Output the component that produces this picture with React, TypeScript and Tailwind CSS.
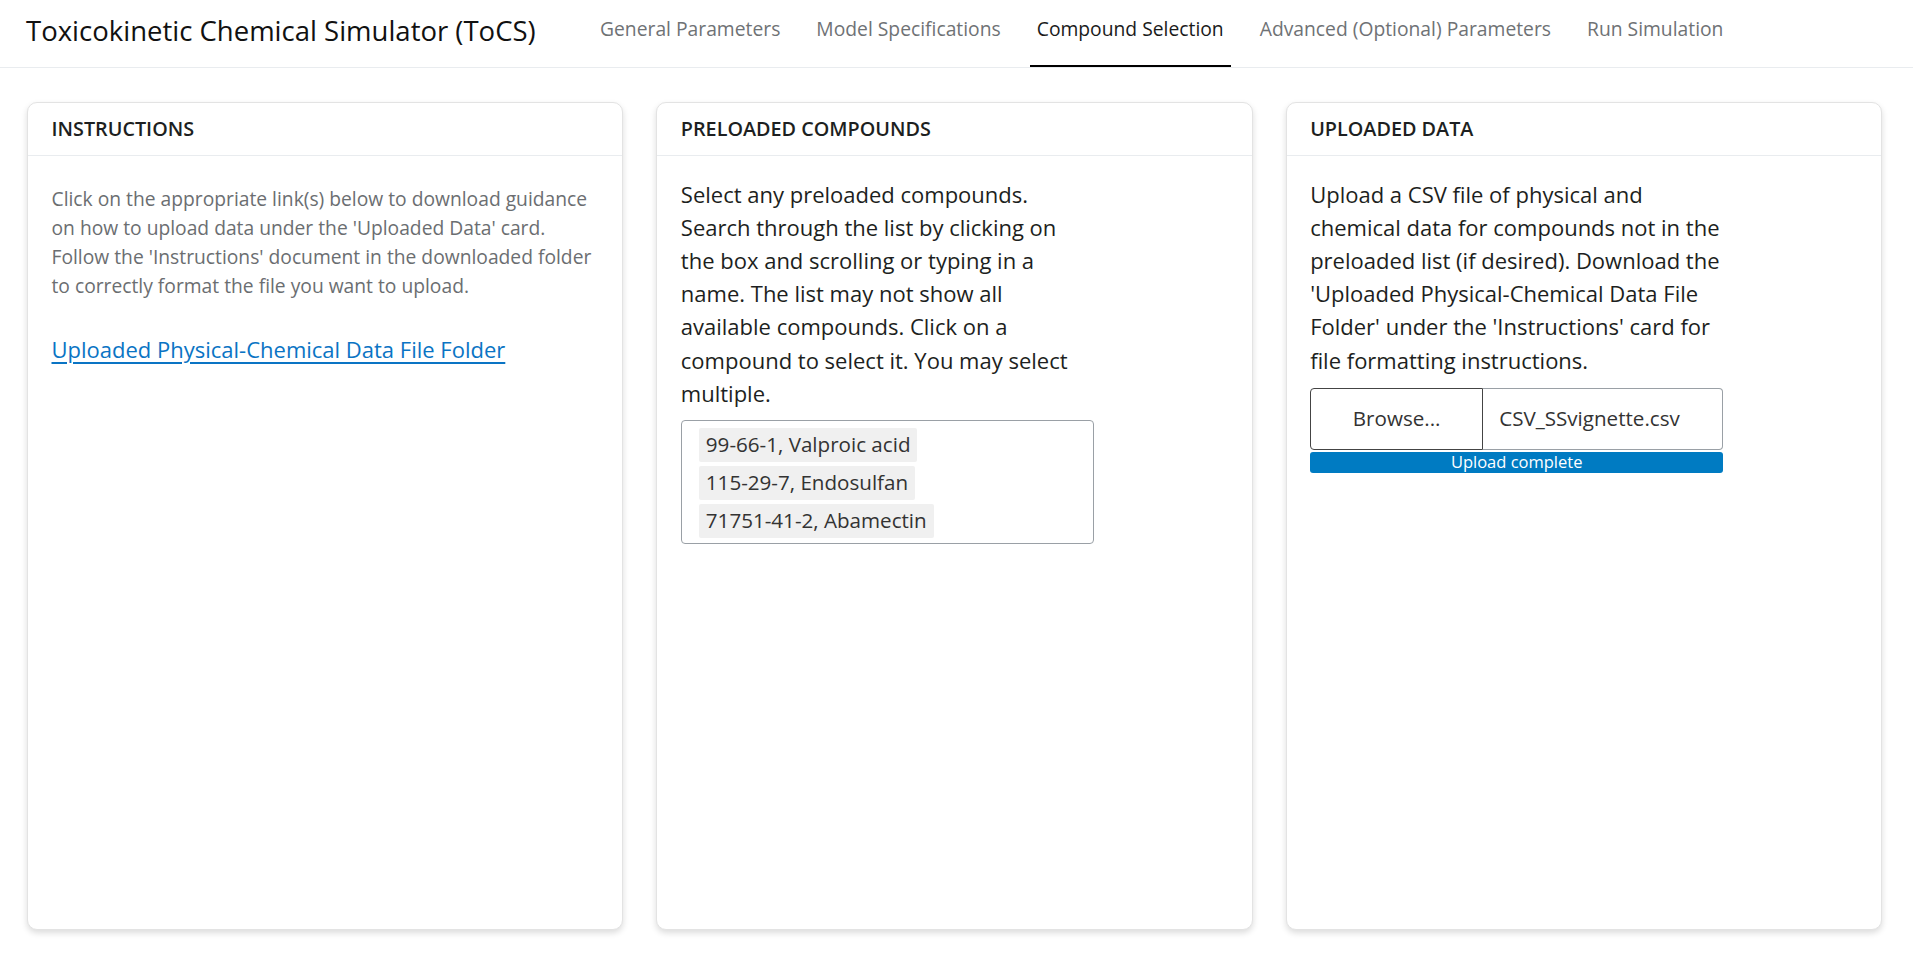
import React from "react";

const font = { fontFamily: '"Open Sans", "Noto Sans", sans-serif' };

function Card({ title, children }: { title: string; children: React.ReactNode }) {
  return (
    <div className="h-[828px] rounded-[10px] border border-[#e3e3e3] bg-white shadow-[0_3px_6px_rgba(0,0,0,0.14)] flex flex-col">
      <div className="h-[53px] px-[23.5px] flex items-center border-b border-[#e9ecef] text-[19.8px] font-semibold text-[#1d1f21]">
        {title}
      </div>
      <div className="px-[23.5px] pt-[21.5px]">{children}</div>
    </div>
  );
}

export default function App() {
  const tabs = [
    "General Parameters",
    "Model Specifications",
    "Compound Selection",
    "Advanced (Optional) Parameters",
    "Run Simulation",
  ];
  return (
    <div className="min-h-screen bg-white text-[#212529]" style={font}>
      <nav className="h-[68px] border-b border-[#e9ecef] flex items-stretch">
        <div className="w-[593px] pl-[26px] flex items-center text-[27.5px] text-[#111] pb-[5px]">
          Toxicokinetic Chemical Simulator (ToCS)
        </div>
        <div className="flex items-stretch gap-[22px]">
          {tabs.map((t) => (
            <div
              key={t}
              className={
                t === "Compound Selection"
                  ? "px-[7px] flex items-center text-[19.3px] text-[#1a1a1a] border-b-[2px] border-[#000] pb-[7px]"
                  : "px-[7px] flex items-center text-[19.3px] text-[#6f7275] pb-[7px] border-b-[2px] border-transparent"
              }
            >
              {t}
            </div>
          ))}
        </div>
      </nav>
      <main className="grid grid-cols-3 gap-[33px] pl-[27px] pr-[31px] pt-[34px]">
        <Card title="INSTRUCTIONS">
          <p className="text-[19.25px] leading-[28.9px] text-[#6b6e71] pt-[7.5px]">
            Click on the appropriate link(s) below to download guidance on how to upload data under the 'Uploaded Data' card. Follow the 'Instructions' document in the downloaded folder to correctly format the file you want to upload.
          </p>
          <a href="#" className="block mt-[32px] text-[22px] leading-[33px] text-[#0a74c4] underline underline-offset-[4px]">
            Uploaded Physical-Chemical Data File Folder
          </a>
        </Card>
        <Card title="PRELOADED COMPOUNDS">
          <div className="w-[413px]">
            <p className="text-[22px] leading-[33.2px] text-[#1d1f21]">
              Select any preloaded compounds. Search through the list by clicking on the box and scrolling or typing in a name. The list may not show all available compounds. Click on a compound to select it. You may select multiple.
            </p>
            <div className="mt-[10px] h-[124px] rounded-[4px] border border-[#9aa0a6] pl-[17px] pt-[7px] flex flex-col items-start gap-[4px]">
              {["99-66-1, Valproic acid", "115-29-7, Endosulfan", "71751-41-2, Abamectin"].map((c) => (
                <div key={c} className="h-[34px] px-[7px] flex items-center rounded-[2px] bg-[#f0f0f0] text-[20.6px] text-[#333]">
                  {c}
                </div>
              ))}
            </div>
          </div>
        </Card>
        <Card title="UPLOADED DATA">
          <div className="w-[413px]">
            <p className="text-[22px] leading-[33.2px] text-[#1d1f21]">
              Upload a CSV file of physical and chemical data for compounds not in the preloaded list (if desired). Download the 'Uploaded Physical-Chemical Data File Folder' under the 'Instructions' card for file formatting instructions.
            </p>
            <div className="mt-[11px] flex h-[62px]">
              <div className="w-[173px] flex items-center justify-center border border-[#444] rounded-l-[4px] text-[20.6px] text-[#333]">
                Browse...
              </div>
              <div className="flex-1 flex items-center pl-[16px] border border-l-0 border-[#9aa0a6] rounded-r-[4px] text-[20.6px] text-[#333]">
                CSV_SSvignette.csv
              </div>
            </div>
            <div className="mt-[2px] h-[21px] rounded-[3px] bg-[#007bc2] flex items-center justify-center text-[16.5px] text-white">
              Upload complete
            </div>
          </div>
        </Card>
      </main>
    </div>
  );
}
